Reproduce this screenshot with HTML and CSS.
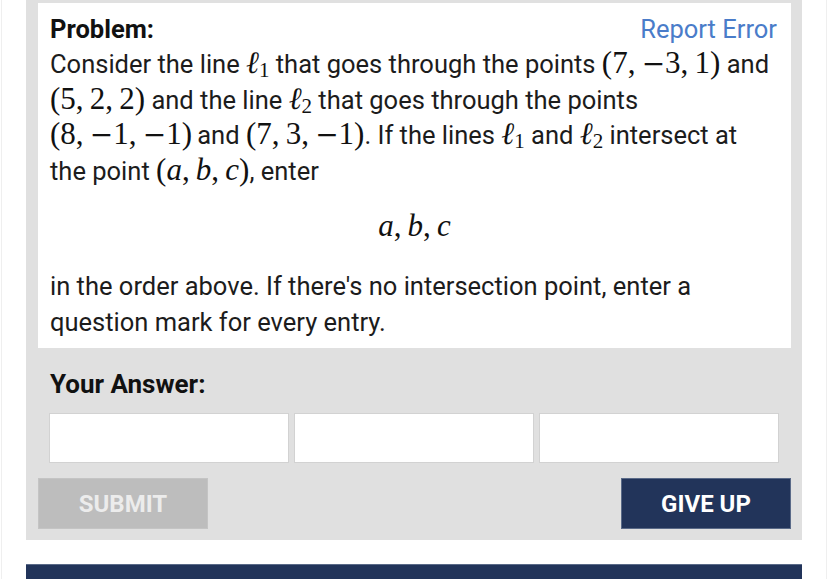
FILE: index.html
```html
<!DOCTYPE html>
<html>
<head>
<meta charset="utf-8">
<link rel="stylesheet" href="styles.css">
</head>
<body>
<div class="page">
  <div class="panel">
    <div class="card">
      <div class="head">
        <span class="title">Problem:</span>
        <span class="report">Report Error</span>
      </div>
      <p class="text">Consider the line <span class="m"><i>ℓ</i><sub>1</sub></span> that goes through the points <span class="m">(7,&thinsp;<span class="neg">−</span>3,&thinsp;1)</span> and <span class="m">(5,&thinsp;2,&thinsp;2)</span> and the line <span class="m"><i>ℓ</i><sub>2</sub></span> that goes through the points <span class="m">(8,&thinsp;<span class="neg">−</span>1,&thinsp;<span class="neg">−</span>1)</span>&thinsp;and <span class="m">(7,&thinsp;3,&thinsp;<span class="neg">−</span>1)</span>. If the lines <span class="m"><i>ℓ</i><sub>1</sub></span> and <span class="m"><i>ℓ</i><sub>2</sub></span> intersect at the point <span class="m">(<i>a</i>,&thinsp;<i>b</i>,&thinsp;<i>c</i>)</span>, enter</p>
      <div class="display"><span class="m"><i>a</i>,&thinsp;<i>b</i>,&thinsp;<i>c</i></span></div>
      <p class="text after">in the order above. If there's no intersection point, enter a question mark for every entry.</p>
    </div>
    <div class="answer">Your Answer:</div>
    <div class="inputs">
      <div class="box"></div>
      <div class="box"></div>
      <div class="box"></div>
    </div>
    <div class="buttons">
      <div class="btn submit">SUBMIT</div>
      <div class="btn giveup">GIVE UP</div>
    </div>
  </div>
  <div class="bar"></div>
</div>
</body>
</html>
```
FILE: styles.css
```css
html, body {
  margin: 0;
  padding: 0;
  background: #ffffff;
}
body {
  font-family: Roboto, "Liberation Sans", sans-serif;
  color: #1a1a1a;
  overflow: hidden;
}
.page {
  margin: 0 1px;
  border-left: 1px solid #efefef;
  border-right: 1px solid #efefef;
  padding: 0 24px;
  height: 579px;
}
.panel {
  background: #e0e0e0;
  padding: 3px 11px 11px 12px;
}
.card {
  background: #ffffff;
  padding: 8px 14px 8px 12px;
}
.head {
  display: flex;
  justify-content: space-between;
  font-size: 25.5px;
  line-height: 36px;
}
.title {
  font-weight: 700;
  color: #111;
}
.report {
  color: #4a7cc9;
}
.text {
  margin: 0;
  font-size: 25.5px;
  line-height: 35.5px;
  color: #1c1c1c;
}
.m {
  font-family: "Liberation Serif", "DejaVu Serif", serif;
  font-size: 31px;
  line-height: 1;
  color: #111;
  white-space: nowrap;
}
.m i {
  font-style: italic;
}
.m .neg {
  font-family: "DejaVu Serif", serif;
  font-size: 28px;
}
.m sub {
  font-size: 21px;
  line-height: 1;
  vertical-align: -4px;
  font-style: normal;
}
.display {
  text-align: center;
  line-height: 36px;
  margin-top: 21px;
  margin-right: -2px;
}
.after {
  margin-top: 20px;
}
.answer {
  font-size: 26px;
  font-weight: 700;
  line-height: 36px;
  margin: 18px 0 0 12px;
  color: #111;
}
.inputs {
  display: flex;
  gap: 5px;
  margin: 11px 0 0 11px;
}
.box {
  width: 238px;
  height: 48px;
  background: #ffffff;
  border: 1px solid #d2d2d2;
}
.buttons {
  display: flex;
  justify-content: space-between;
  margin-top: 15px;
}
.btn {
  width: 170px;
  height: 51px;
  display: flex;
  align-items: center;
  justify-content: center;
  font-size: 24px;
  font-weight: 700;
  box-sizing: border-box;
}
.submit {
  background: #bdbdbd;
  color: #ececec;
  border: 1px solid #c4c4c4;
}
.giveup {
  background: #22345a;
  color: #ffffff;
  border: 1px solid #5a6a88;
}
.bar {
  margin-top: 24px;
  height: 30px;
  background: #22345a;
  border-top: 1px solid #5a6a88;
}
```
